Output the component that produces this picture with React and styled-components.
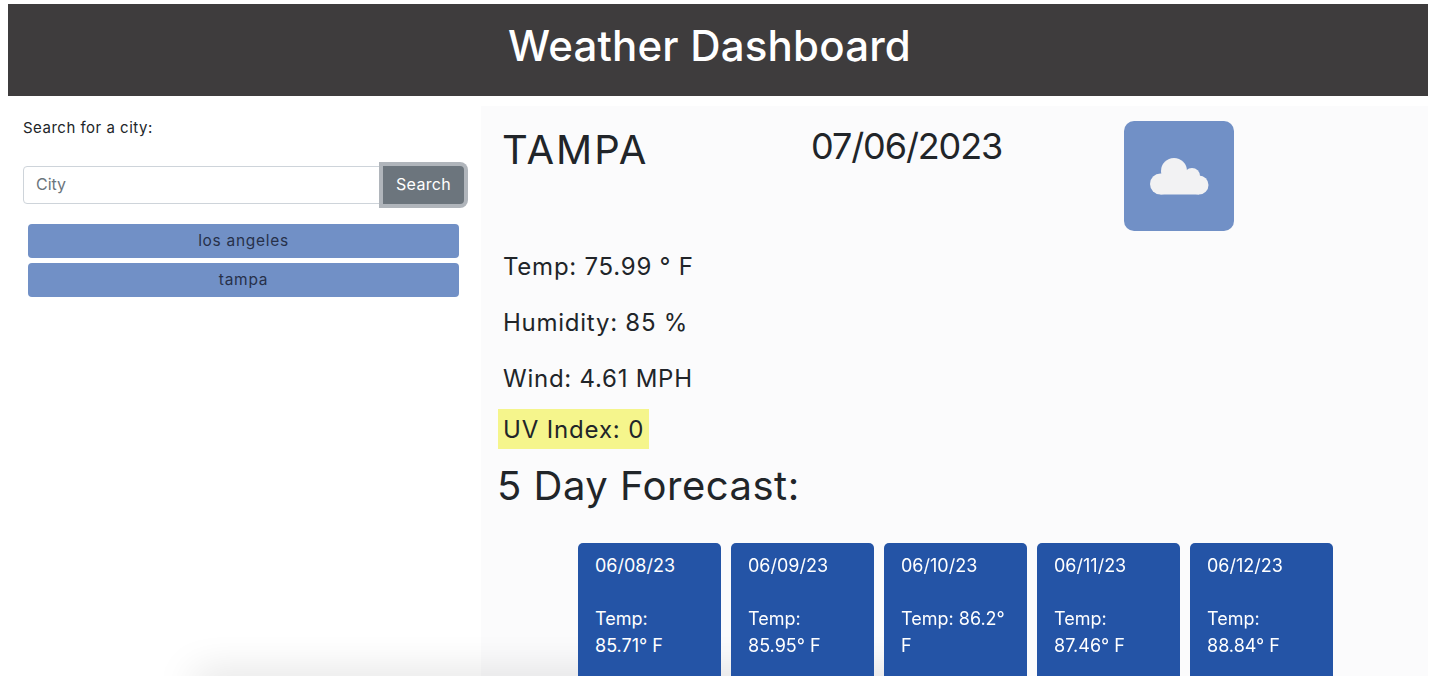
import React from "react";
import styled, { createGlobalStyle } from "styled-components";

const Global = createGlobalStyle`
  html, body { margin: 0; padding: 0; height: 676px; overflow: hidden; background: #fff; }
  body { font-family: Inter, "Liberation Sans", sans-serif; color: #212529; }
  * { box-sizing: border-box; }
`;
const Page = styled.div`
  padding: 4px 9px 0 8px;
  height: 676px;
  overflow: hidden;
`;
const Header = styled.header`
  height: 92px;
  padding: 0 17px 10px 0;
  background: #3e3c3d;
  display: flex;
  align-items: center;
  justify-content: center;
`;
const Title = styled.h1`
  margin: 0;
  color: #fff;
  font-size: 42px;
  font-weight: 500;
  letter-spacing: 0.2px;
`;
const Columns = styled.div`
  display: grid;
  grid-template-columns: 473px 1fr;
`;
const Sidebar = styled.aside`
  padding: 22px 0 0 15px;
`;
const Label = styled.p`
  margin: 0 0 29px;
  font-size: 15px;
  line-height: 19px;
  letter-spacing: 0.5px;
`;
const SearchRow = styled.form`
  display: flex;
  height: 38px;
  width: 441px;
  margin-bottom: 20px;
`;
const CityInput = styled.input`
  flex: 1;
  min-width: 0;
  height: 38px;
  padding: 0 12px 2px;
  border: 1px solid #ced4da;
  border-radius: 4px 0 0 4px;
  font: 16px Inter, sans-serif;
  &::placeholder { color: #6c757d; }
`;
const SearchButton = styled.button`
  width: 81px;
  height: 38px;
  padding: 0 0 2px;
  border: 0;
  border-radius: 0 4px 4px 0;
  background: #6c757d;
  color: #fff;
  font: 16px Inter, sans-serif;
  letter-spacing: 0.3px;
  box-shadow: 0 0 0 4px #b0b5bb;
  position: relative;
`;
const HistoryList = styled.div`
  display: flex;
  flex-direction: column;
  gap: 5px;
  width: 431px;
  margin-left: 5px;
`;
const HistoryButton = styled.button`
  height: 34px;
  padding: 0 0 2px;
  border: 0;
  border-radius: 4px;
  background: #7190c6;
  color: #27304a;
  font: 15.5px Inter, sans-serif;
  letter-spacing: 0.7px;
`;
const Main = styled.main`
  margin-top: 10px;
  background: #fbfbfc;
  padding: 15px 16px 0 17px;
`;
const Top = styled.div`
  display: flex;
  align-items: flex-start;
  height: 131px;
  padding-left: 4px;
`;
const City = styled.h2`
  margin: 0;
  width: 309px;
  font-size: 40px;
  line-height: 58px;
  font-weight: 400;
  letter-spacing: 2px;
`;
const DateText = styled.h2`
  margin: 0;
  width: 313px;
  font-size: 36px;
  line-height: 50px;
  font-weight: 400;
  letter-spacing: -1.1px;
`;
const IconBox = styled.div`
  width: 110px;
  height: 110px;
  border-radius: 10px;
  background: #7190c6;
  display: flex;
  align-items: center;
  justify-content: center;
`;
const Stats = styled.div`
  display: flex;
  flex-direction: column;
  gap: 26px;
  margin: 0 0 15px 5px;
`;
const Stat = styled.p`
  margin: 0;
  font-size: 24px;
  line-height: 30px;
  letter-spacing: 0.75px;
`;
const UV = styled.div`
  display: inline-block;
  height: 40px;
  padding: 0 5px;
  background: #f5f58c;
  font-size: 24px;
  line-height: 42px;
  letter-spacing: 0.85px;
`;
const ForecastTitle = styled.h2`
  margin: 13px 0 33px;
  font-size: 40px;
  line-height: 48px;
  font-weight: 400;
  letter-spacing: 0.5px;
  text-indent: -1px;
`;
const Cards = styled.div`
  display: flex;
  gap: 10px;
  padding-left: 80px;
`;
const Card = styled.article`
  position: relative;
  z-index: 1;
  width: 143px;
  height: 240px;
  padding: 9px 17px;
  background: #2454a6;
  border-radius: 5px;
  color: #fff;
  font-size: 18px;
  line-height: 27px;
  flex: none;
`;
const CardDate = styled.div`
  margin-bottom: 26px;
`;
const BottomShadow = styled.div`
  position: fixed;
  left: 195px;
  width: 760px;
  bottom: -20px;
  height: 20px;
  box-shadow: 0 0 40px rgba(0, 0, 0, 0.18);
`;

const forecast = [
  ["06/08/23", "Temp: 85.71° F"],
  ["06/09/23", "Temp: 85.95° F"],
  ["06/10/23", "Temp: 86.2° F"],
  ["06/11/23", "Temp: 87.46° F"],
  ["06/12/23", "Temp: 88.84° F"],
];

export default function App() {
  return (
    <Page>
      <Global />
      <Header><Title>Weather Dashboard</Title></Header>
      <Columns>
        <Sidebar>
          <Label>Search for a city:</Label>
          <SearchRow onSubmit={(e) => e.preventDefault()}>
            <CityInput placeholder="City" />
            <SearchButton type="button">Search</SearchButton>
          </SearchRow>
          <HistoryList>
            <HistoryButton>los angeles</HistoryButton>
            <HistoryButton>tampa</HistoryButton>
          </HistoryList>
        </Sidebar>
        <Main>
          <Top>
            <City>TAMPA</City>
            <DateText>07/06/2023</DateText>
            <IconBox>
              <svg width="60" height="38" viewBox="0 0 60 38" fill="#f2f2f3">
                <circle cx="11.5" cy="27" r="10.500" />
                <circle cx="25" cy="14" r="13" />
                <circle cx="43" cy="19" r="8" />
                <circle cx="50" cy="28" r="9.500" />
                <rect x="11.500" y="20" width="38.500" height="17.500" />
              </svg>
            </IconBox>
          </Top>
          <Stats>
            <Stat>Temp: 75.99 ° F</Stat>
            <Stat>Humidity: 85 %</Stat>
            <Stat>Wind: 4.61 MPH</Stat>
          </Stats>
          <UV>UV Index: 0</UV>
          <ForecastTitle>5 Day Forecast:</ForecastTitle>
          <Cards>
            {forecast.map(([d, t]) => (
              <Card key={d}>
                <CardDate>{d}</CardDate>
                <div>{t}</div>
              </Card>
            ))}
          </Cards>
        </Main>
      </Columns>
      <BottomShadow />
    </Page>
  );
}
